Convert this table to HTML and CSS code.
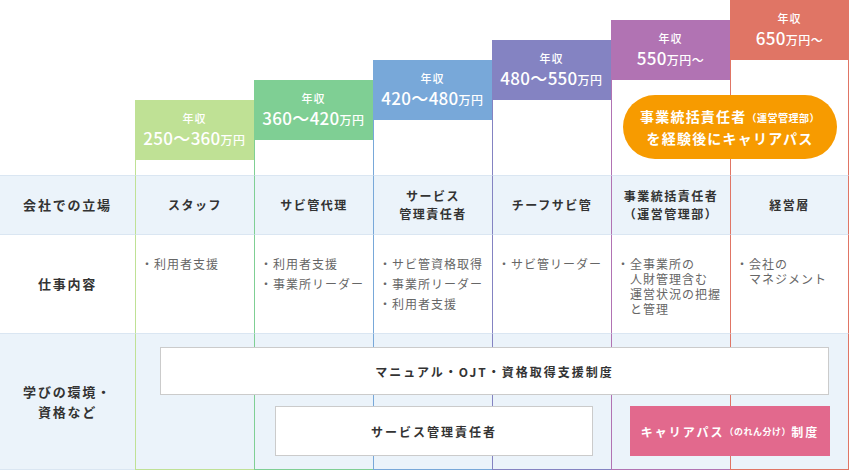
FILE: index.html
```html
<!DOCTYPE html>
<html lang="ja">
<head>
<meta charset="utf-8">
<title>キャリアパス</title>
<link rel="stylesheet" href="styles.css">
</head>
<body>
<div class="chart">
  <div class="corner r1 c0"></div>

  <div class="tier r1 c1 k1 t1"><div class="salary"><span class="lbl">年収</span><span class="amt">250〜360<small>万円</small></span></div><div class="stem"></div></div>
  <div class="tier r1 c2 k2 t2"><div class="salary"><span class="lbl">年収</span><span class="amt">360〜420<small>万円</small></span></div><div class="stem"></div></div>
  <div class="tier r1 c3 k3 t3"><div class="salary"><span class="lbl">年収</span><span class="amt">420〜480<small>万円</small></span></div><div class="stem"></div></div>
  <div class="tier r1 c4 k4 t4"><div class="salary"><span class="lbl">年収</span><span class="amt">480〜550<small>万円</small></span></div><div class="stem"></div></div>
  <div class="tier r1 c5 k5 t5"><div class="salary"><span class="lbl">年収</span><span class="amt">550<small>万円〜</small></span></div><div class="stem"></div></div>
  <div class="tier r1 c6 k6 t6"><div class="salary"><span class="lbl">年収</span><span class="amt">650<small>万円〜</small></span></div><div class="stem"></div></div>

  <div class="pill r1 c5w">
    <span>事業統括責任者<small>（運営管理部）</small></span>
    <span>を経験後にキャリアパス</span>
  </div>

  <div class="label head r2 c0">会社での立場</div>
  <div class="cell head r2 c1 k1">スタッフ</div>
  <div class="cell head r2 c2 k2">サビ管代理</div>
  <div class="cell head r2 c3 k3">サービス<br>管理責任者</div>
  <div class="cell head r2 c4 k4">チーフサビ管</div>
  <div class="cell head r2 c5 k5">事業統括責任者<br>（運営管理部）</div>
  <div class="cell head r2 c6 k6">経営層</div>

  <div class="label work r3 c0">仕事内容</div>
  <div class="cell work r3 c1 k1"><ul><li>利用者支援</li></ul></div>
  <div class="cell work r3 c2 k2"><ul><li>利用者支援</li><li>事業所リーダー</li></ul></div>
  <div class="cell work r3 c3 k3"><ul><li>サビ管資格取得</li><li>事業所リーダー</li><li>利用者支援</li></ul></div>
  <div class="cell work r3 c4 k4"><ul><li>サビ管リーダー</li></ul></div>
  <div class="cell work r3 c5 k5"><ul><li>全事業所の<br>人財管理含む<br>運営状況の把握<br>と管理</li></ul></div>
  <div class="cell work r3 c6 k6"><ul><li>会社の<br>マネジメント</li></ul></div>

  <div class="label env r4 c0">学びの環境・<br>資格など</div>
  <div class="cell env r4 c1 k1"></div>
  <div class="cell env r4 c2 k2"></div>
  <div class="cell env r4 c3 k3"></div>
  <div class="cell env r4 c4 k4"></div>
  <div class="cell env r4 c5 k5"></div>
  <div class="cell env r4 c6 k6"></div>

  <div class="programs r4 c1w">
    <div class="prog prog-all">マニュアル・OJT・資格取得支援制度</div>
    <div class="prog-row">
      <div class="prog prog-sabi">サービス管理責任者</div>
      <div class="prog prog-career">キャリアパス<small>（のれん分け）</small>制度</div>
    </div>
  </div>
</div>
</body>
</html>
```

FILE: styles.css
```css
* { box-sizing: border-box; margin: 0; padding: 0; }

body {
  margin: 0;
  background: #fff;
  font-family: "Noto Sans CJK JP", "Noto Sans", sans-serif;
  color: #333;
}

.chart {
  display: grid;
  width: 849px;
  grid-template-columns: 135px repeat(6, 119px);
  grid-template-rows: 175px 59px 99px 137px;
}

/* grid placement */
.r1 { grid-row: 1; }
.r2 { grid-row: 2; }
.r3 { grid-row: 3; }
.r4 { grid-row: 4; }
.c0 { grid-column: 1; }
.c1 { grid-column: 2; }
.c2 { grid-column: 3; }
.c3 { grid-column: 4; }
.c4 { grid-column: 5; }
.c5 { grid-column: 6; }
.c6 { grid-column: 7; }
.c5w { grid-column: 6 / 8; }
.c1w { grid-column: 2 / 8; }

/* column colours */
.k1 { --c: #bfe195; }
.k2 { --c: #7fcf94; }
.k3 { --c: #78a8d9; }
.k4 { --c: #8483c2; }
.k5 { --c: #b173b3; }
.k6 { --c: #e07565; }

/* salary tiers */
.tier {
  display: flex;
  flex-direction: column;
}
.t1 { padding-top: 100px; }
.t2 { padding-top: 80px; }
.t3 { padding-top: 60px; }
.t4 { padding-top: 40px; }
.t5 { padding-top: 20px; }
.t6 { padding-top: 0; }

.salary {
  height: 60px;
  background: var(--c);
  color: #fff;
  display: flex;
  flex-direction: column;
  align-items: center;
  padding-top: 10px;
  font-weight: 500;
}
.salary .lbl {
  font-size: 11px;
  line-height: 16px;
  letter-spacing: 1px;
}
.salary .amt {
  font-size: 17px;
  line-height: 24px;
  letter-spacing: 0.3px;
}
.salary .amt small {
  font-size: 12px;
  letter-spacing: 0.5px;
}
.stem {
  flex: 1;
  border-left: 1px solid var(--c);
}
.k6 .stem { border-right: 1px solid var(--c); }

/* orange pill */
.pill {
  margin: 95px 12px 16px 12px;
  height: 64px;
  border-radius: 32px;
  background: #f79b00;
  color: #fff;
  font-weight: 700;
  font-size: 14px;
  line-height: 20px;
  letter-spacing: 1.2px;
  display: flex;
  flex-direction: column;
  align-items: center;
  justify-content: center;
}
.pill small {
  font-size: 10px;
  letter-spacing: 0.5px;
}

/* table rows */
.label {
  display: flex;
  align-items: center;
  justify-content: center;
  text-align: center;
  border-top: 1px solid #dae6f2;
  font-size: 13px;
  font-weight: 700;
  letter-spacing: 1.8px;
  line-height: 20px;
  color: #333;
}
.cell {
  border-top: 1px solid #dae6f2;
  border-left: 1px solid var(--c);
}
.k6.cell { border-right: 1px solid var(--c); }

.head {
  background: #ebf3fa;
}
.cell.head {
  display: flex;
  align-items: center;
  justify-content: center;
  text-align: center;
  font-size: 12px;
  font-weight: 700;
  letter-spacing: 1.5px;
  line-height: 18px;
  color: #333;
}

.work { background: #fff; }
.cell.work {
  padding: 21px 4px 0 5px;
}
.cell.work ul {
  list-style: none;
}
.cell.work li {
  font-size: 12px;
  line-height: 15px;
  letter-spacing: 1px;
  color: #666;
  padding-left: 13px;
  text-indent: -13px;
  margin-bottom: 5px;
}
.cell.work li::before {
  content: "・";
}

.env { background: #ebf3fa; }
.label.env {
  border-bottom: 1px solid #dae6f2;
}
.cell.env {
  border-bottom: 1px solid var(--c);
}

/* programs */
.programs {
  display: flex;
  flex-direction: column;
  align-items: flex-start;
  padding-top: 14px;
}
.prog {
  display: flex;
  align-items: center;
  justify-content: center;
  font-size: 12px;
  font-weight: 700;
  letter-spacing: 2px;
  color: #333;
  background: #fff;
  border: 1px solid #cbcbcb;
}
.prog-all {
  margin-left: 25px;
  width: 669px;
  height: 48px;
}
.prog-row {
  display: flex;
  margin-top: 11px;
  margin-left: 140px;
  gap: 37px;
}
.prog-sabi {
  width: 318px;
  height: 50px;
}
.prog-career {
  width: 200px;
  height: 50px;
  background: #e2698d;
  border: none;
  color: #fff;
}
.prog-career small {
  font-size: 9px;
  letter-spacing: 0.5px;
}
```
